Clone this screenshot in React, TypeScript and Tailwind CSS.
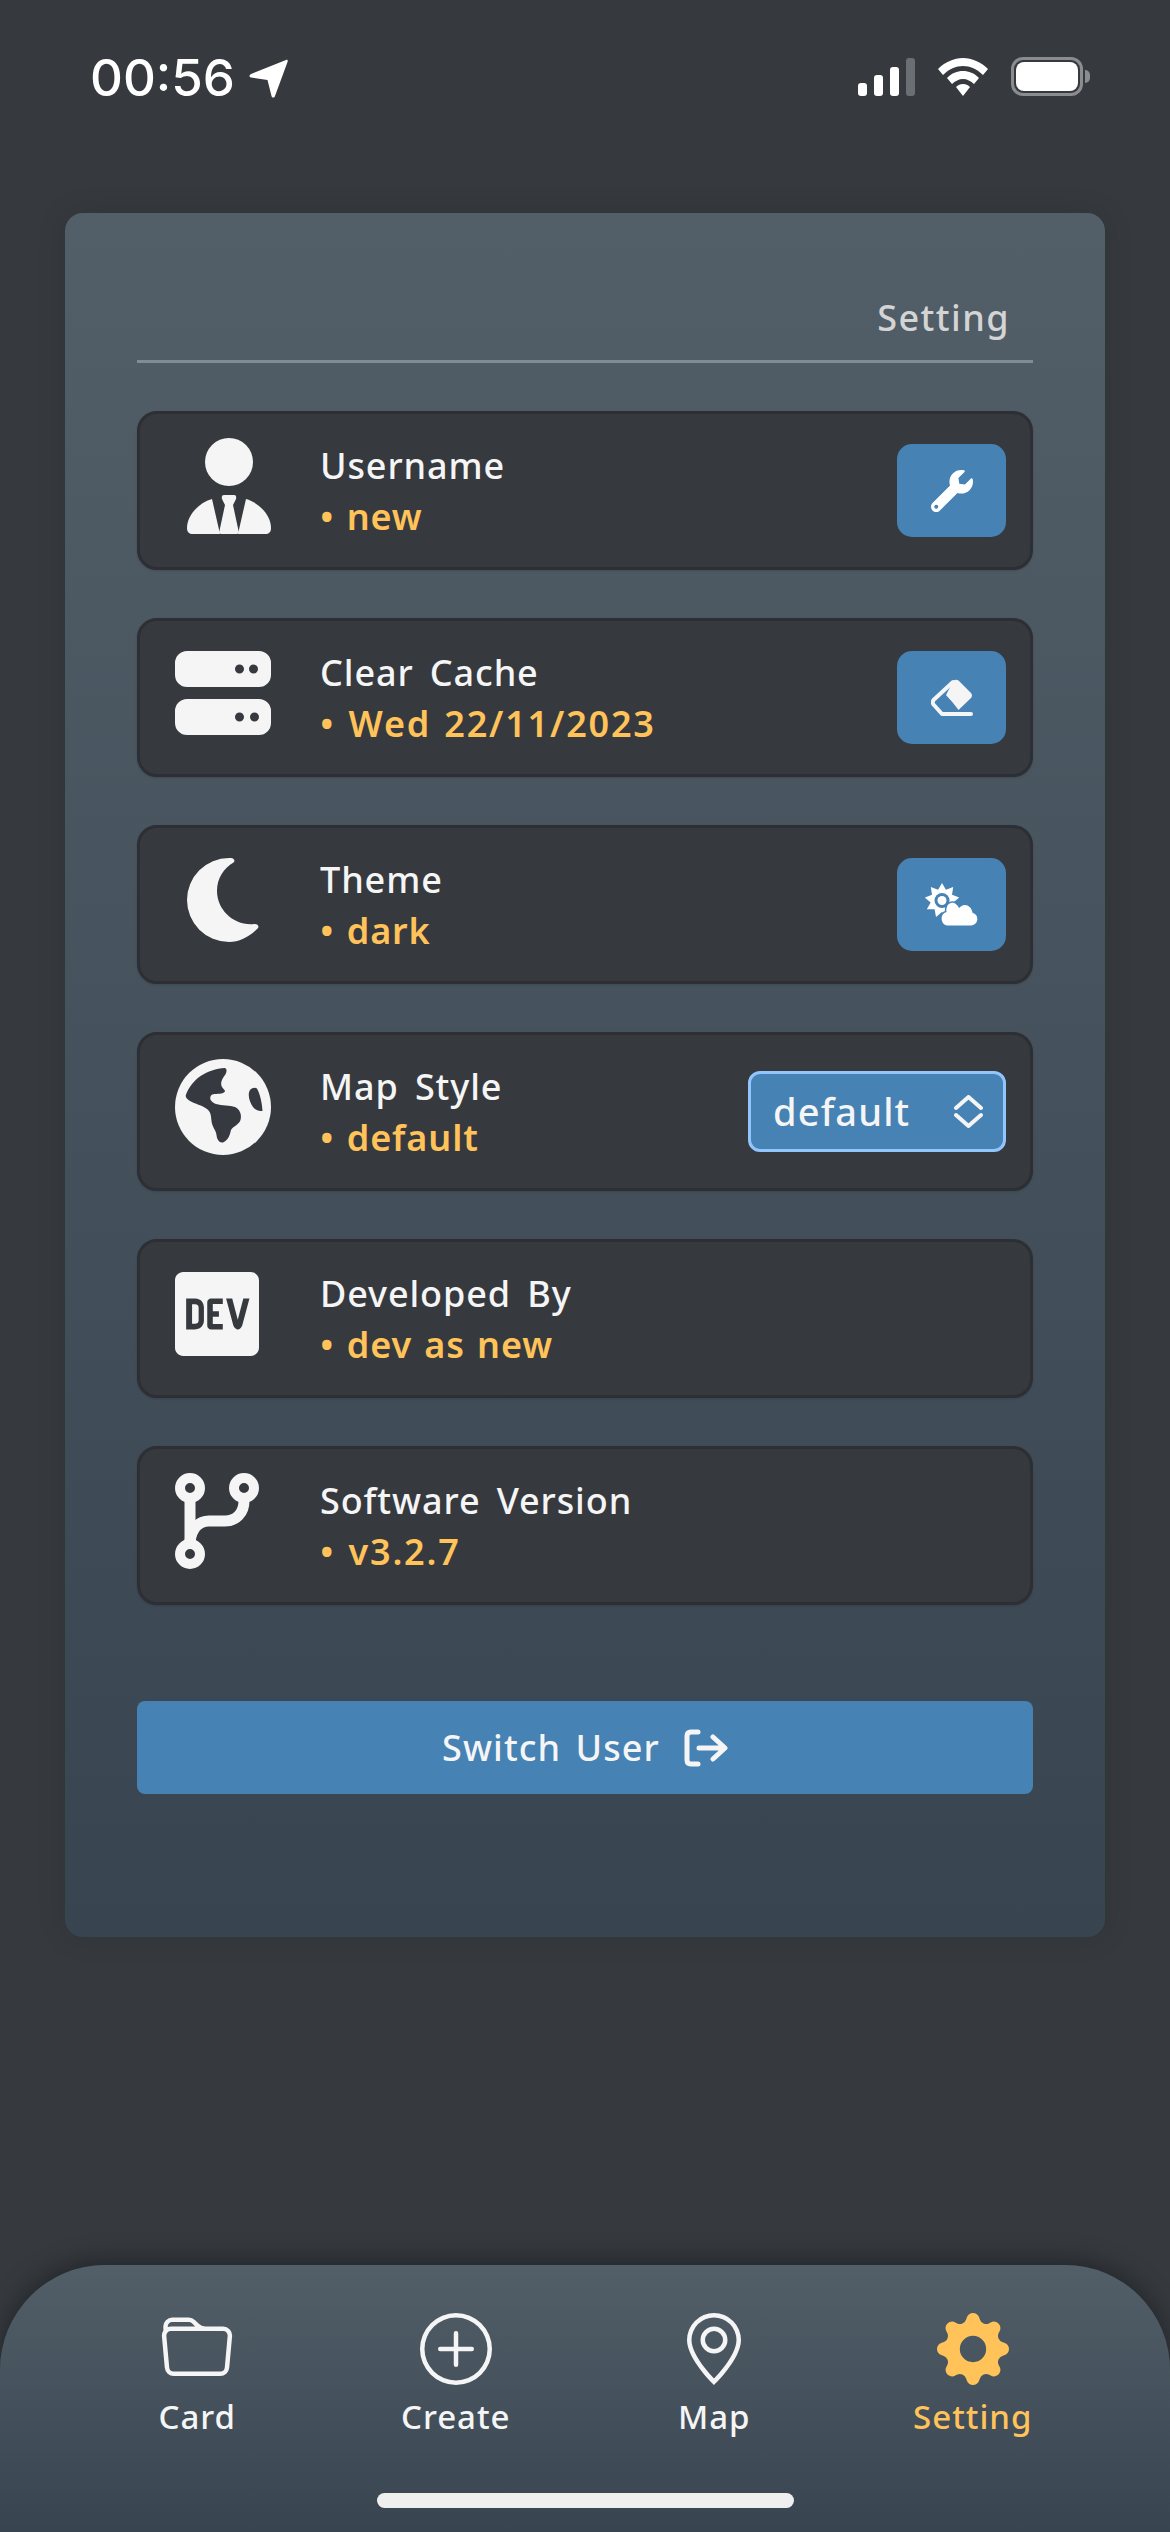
// Settings screen
import type { ReactNode } from 'react';
import { BsFolder, BsPlusCircle, BsGeoAlt, BsGearFill } from 'react-icons/bs';
import { FaDev, FaWrench } from 'react-icons/fa';

const font = { fontFamily: '"Noto Sans", sans-serif' };

const UserTieIcon = () => (
  <svg width="84" height="96" viewBox="0 0 84 96" fill="#f5f5f5" className="ml-3">
    <circle cx="42" cy="24" r="24" />
    <path d="M25 61 C11 65 0 78 0 90 C0 94 2 96 6 96 L33 96 Z" />
    <path d="M59 61 C73 65 84 78 84 90 C84 94 82 96 78 96 L51 96 Z" />
    <path d="M37 57 H47 Q50 57 49 61 L46 67 L52 95 L50 96 H34 L32 95 L38 67 L35 61 Q34 57 37 57 Z" />
  </svg>
);

const ServerIcon = () => (
  <svg width="96" height="84" viewBox="0 0 96 84" fill="#f5f5f5">
    <path fillRule="evenodd" d="M12 0 H84 A12 12 0 0 1 96 12 V24 A12 12 0 0 1 84 36 H12 A12 12 0 0 1 0 24 V12 A12 12 0 0 1 12 0 Z M60 18 a4.5 4.5 0 1 0 9 0 a4.5 4.5 0 1 0 -9 0 Z M74 18 a4.5 4.5 0 1 0 9 0 a4.5 4.5 0 1 0 -9 0 Z" />
    <path fillRule="evenodd" d="M12 48 H84 A12 12 0 0 1 96 60 V72 A12 12 0 0 1 84 84 H12 A12 12 0 0 1 0 72 V60 A12 12 0 0 1 12 48 Z M60 66 a4.5 4.5 0 1 0 9 0 a4.5 4.5 0 1 0 -9 0 Z M75 66 a4.5 4.5 0 1 0 9 0 a4.5 4.5 0 1 0 -9 0 Z" />
  </svg>
);

const MoonIcon = () => (
  <svg width="72" height="84" viewBox="0 0 72 84" fill="#f5f5f5" className="ml-3">
    <path d="M44 0 C47 0 48.5 3 46.5 4.5 C37 10 30 20 30 33 C30 52 47 68 67 66 C71 65.5 73 69 70 71 C62 79 52 84 42 84 A42 42 0 0 1 42 0 Z" />
  </svg>
);

const GlobeIcon = () => (
  <svg width="96" height="96" viewBox="0 0 96 96">
    <circle cx="48" cy="48" r="48" fill="#f5f5f5" />
    <path
      fill="#36393f"
      d="M11 35.5 C17 20 32 10 50 9 C52 10 52 13 50 16 C47 20 45 24 47 28 C49 31 52 32 48 34 C44 35.5 38 34 36 36.5 C34 40 36 43 41 45 C47 47 55 46 60 48 C65 50 67 56 65.5 61 C64 66 58 67 56 71 C55 75 54 80 49 83 C45 85 42 81 41.5 76 C41 71 37 68 36.5 62 C36 57 36 53 32 50 C27 46 20 45 15 42 C12 40 10 38 11 35.5 Z"
    />
    <path fill="#36393f" d="M75 31 C77 29 80 28 82 29.5 C85 35 87 43 87.5 52 C84 52 80 51 78 48 C75 44 72 36 75 31 Z" />
  </svg>
);

const BranchIcon = () => (
  <svg width="84" height="96" viewBox="0 0 84 96" fill="none" stroke="#f5f5f5">
    <circle cx="15" cy="15" r="10" strokeWidth="10" />
    <circle cx="69" cy="15" r="10" strokeWidth="10" />
    <circle cx="15" cy="81" r="10" strokeWidth="10" />
    <path d="M15 28 V68" strokeWidth="11" />
    <path d="M69 28 C69 40 61 48 50 48 H34 C24 48 17 55 15 68" strokeWidth="11" />
  </svg>
);

const EraserIcon = () => (
  <svg width="42" height="38" viewBox="0 0 42 38" fill="#f5f5f5">
    <path d="M22.5 1.5 Q25 0 27.5 1.5 L40 14 Q42 16.5 40 19 L27.5 31 L15.5 15 Z" />
    <path d="M22 3 L2.5 21 Q1 23.5 2.5 25.5 L11 35 H40" fill="none" stroke="#f5f5f5" strokeWidth="4" strokeLinecap="round" strokeLinejoin="round" />
    <path d="M16 15 L28 28" fill="none" stroke="#f5f5f5" strokeWidth="3" />
  </svg>
);

// spiky sun outline
const sunPoints = Array.from({ length: 18 }, (_, i) => {
  const r = i % 2 === 0 ? 17.5 : 11.5;
  const a = (i * Math.PI) / 9 - Math.PI / 2;
  return `${(17 + r * Math.cos(a)).toFixed(1)},${(17.5 + r * Math.sin(a)).toFixed(1)}`;
}).join(' ');

const CloudSunIcon = () => (
  <svg width="54" height="44" viewBox="0 0 54 44" fill="#fff">
    <polygon points={sunPoints} />
    <circle cx="17" cy="17.5" r="7.5" fill="#4682b4" />
    <circle cx="17" cy="17.5" r="4.5" />
    <path
      stroke="#4682b4"
      strokeWidth="3"
      paintOrder="stroke"
      d="M22 42.5 H46 A6.5 6.5 0 0 0 47.5 29.7 C47 25 43 21.5 39 22 C37 22.5 35 24 34 25 C32 21 29 19 26 20 C22 21 21 25 21.5 29 A7 7 0 0 0 22 42.5 Z"
    />
  </svg>
);

const LogoutIcon = () => (
  <svg width="44" height="38" viewBox="0 0 44 38" fill="none" stroke="#f5f5f5" strokeWidth="5" strokeLinecap="round" strokeLinejoin="round">
    <path d="M14 3 H7 Q3 3 3 7 V31 Q3 35 7 35 H14" />
    <path d="M15 19 H40 M29 8 L41 19 L29 30" />
  </svg>
);

const ActionButton = ({ children }: { children: ReactNode }) => (
  <button className="w-[109px] h-[93px] bg-[#4682b4] rounded-[15px] flex items-center justify-center">{children}</button>
);

const Row = ({ icon, title, value, action, digits }: { icon: ReactNode; title: string; value: string; action?: ReactNode; digits?: boolean }) => (
  <div className="h-[159px] border-[3px] border-[#2d2f34] rounded-[20px] bg-[#363a3f] flex items-start pl-[35px] pt-[24px] shadow-sm">
    <div className="w-[96px] h-[96px] flex items-center shrink-0">{icon}</div>
    <div className="ml-[49px] pt-[2px]">
      <div className="text-[36px] leading-[51px] font-medium tracking-[0.025em] [word-spacing:6px] text-[#f5f5f5]">{title}</div>
      <div className={`text-[36px] leading-[51px] font-semibold [word-spacing:2px] text-[#ffc35a] ${digits ? 'tracking-[0.05em]' : 'tracking-[0.025em]'}`}>• {value}</div>
    </div>
    {action && <div className="ml-auto mr-[24px] mt-[6px]">{action}</div>}
  </div>
);

const NavItem = ({ icon, label, active }: { icon: ReactNode; label: string; active?: boolean }) => (
  <div className="flex flex-col items-center">
    <div className="h-[72px] flex items-center justify-center">{icon}</div>
    <span className={`text-[33px] leading-[44px] mt-[10px] font-medium tracking-[0.03em] ${active ? 'text-[#ffc35a]' : 'text-[#f5f5f5]'}`}>{label}</span>
  </div>
);

export default function App() {
  return (
    <div className="h-[2532px] bg-[#363a3f] flex flex-col overflow-hidden" style={font}>
      {/* status bar */}
      <div className="h-[213px] shrink-0 flex items-start justify-between pl-[90px] pr-[80px] pt-[50px]">
        <div className="flex items-center text-white gap-[14px]">
          <span className="text-[51px] leading-[56px] font-medium" style={{ fontFamily: 'Inter, sans-serif' }}>00:56</span>
          <svg width="39" height="39" viewBox="0 0 39 39" fill="#fff">
            <path d="M37 1 C38 0.5 39 1 38.7 2.5 L26 37 C25.4 39 23 39 22.5 37 L18.5 21 L2 18.5 C0 18 0 16 2 15 Z" />
          </svg>
        </div>
        <div className="flex items-center gap-[23px] pt-[7px]">
          <div className="flex items-end gap-[7px] h-[38px]">
            <div className="w-[9px] h-[13px] bg-white rounded-[3px]" />
            <div className="w-[9px] h-[21px] bg-white rounded-[3px]" />
            <div className="w-[9px] h-[29px] bg-white rounded-[3px]" />
            <div className="w-[9px] h-[38px] bg-[#6b6e73] rounded-[3px]" />
          </div>
          <svg width="50" height="38" viewBox="0 0 50 38" fill="#fff">
            <path d="M25 0 C34 0 43 4 50 11 L45 17 C39 11 32 8 25 8 C18 8 11 11 5 17 L0 11 C7 4 16 0 25 0 Z" />
            <path d="M25 13 C31 13 36 15 41 20 L36 26 C33 23 29 21 25 21 C21 21 17 23 14 26 L9 20 C14 15 19 13 25 13 Z" />
            <path d="M25 26 C28 26 30 27 32 29 L25 38 L18 29 C20 27 22 26 25 26 Z" />
          </svg>
          <div className="flex items-center">
            <div className="w-[72px] h-[39px] rounded-[12px] border-[3px] border-[#8a8c90] p-[2px]">
              <div className="w-full h-full bg-white rounded-[8px]" />
            </div>
            <div className="w-[5px] h-[13px] bg-[#8a8c90] rounded-r-full ml-[2px]" />
          </div>
        </div>
      </div>

      {/* card */}
      <div className="mx-[65px] h-[1724px] shrink-0 rounded-[18px] bg-gradient-to-b from-[#525f69] to-[#38444f] px-[72px] shadow-[0_0_30px_rgba(0,0,0,0.12)]">
        <div className="h-[150px] border-b-[3px] border-[#7f8b95] flex justify-end items-start pt-[83px] pr-[23px]">
          <span className="text-[36px] leading-[44px] text-[#d4d4d4] font-medium tracking-[0.04em]">Setting</span>
        </div>
        <div className="mt-[48px] flex flex-col gap-[48px]">
          <Row icon={<UserTieIcon />} title="Username" value="new" action={<ActionButton><FaWrench size={42} color="#fff" /></ActionButton>} />
          <Row icon={<ServerIcon />} title="Clear Cache" value="Wed 22/11/2023" digits action={<ActionButton><EraserIcon /></ActionButton>} />
          <Row icon={<MoonIcon />} title="Theme" value="dark" action={<ActionButton><CloudSunIcon /></ActionButton>} />
          <Row
            icon={<GlobeIcon />}
            title="Map Style"
            value="default"
            action={
              <div className="w-[258px] h-[81px] mt-[6px] bg-[#4682b4] border-[3px] border-[#93c5fd] rounded-[12px] flex items-center justify-between pl-[22px] pr-[20px]">
                <span className="text-[38px] font-medium text-[#f5f5f5] tracking-[0.03em]">default</span>
                <svg width="29" height="33" viewBox="0 0 29 33" fill="none" stroke="#f5f5f5" strokeWidth="4" strokeLinecap="round" strokeLinejoin="round">
                  <path d="M2 13 L14.5 2 L27 13 M2 20 L14.5 31 L27 20" />
                </svg>
              </div>
            }
          />
          <Row icon={<FaDev size={96} color="#f5f5f5" className="-ml-[6px]" />} title="Developed By" value="dev as new" />
          <Row icon={<BranchIcon />} title="Software Version" value="v3.2.7" digits />
        </div>
        <button className="mt-[96px] w-full h-[93px] bg-[#4682b4] rounded-[8px] flex items-center justify-center gap-[24px] text-[36px] font-medium text-[#f5f5f5] tracking-[0.03em] [word-spacing:4px]">
          Switch User
          <LogoutIcon />
        </button>
      </div>

      {/* tab bar */}
      <div className="mt-auto h-[267px] shrink-0 rounded-t-[105px] bg-gradient-to-b from-[#525f69] to-[#38444f] shadow-[0_-6px_24px_rgba(0,0,0,0.35)] flex flex-col">
        <div className="grid grid-cols-4 px-[68px] pt-[48px]">
          <NavItem icon={<BsFolder size={72} color="#f5f5f5" />} label="Card" />
          <NavItem icon={<BsPlusCircle size={72} color="#f5f5f5" />} label="Create" />
          <NavItem icon={<BsGeoAlt size={72} color="#f5f5f5" />} label="Map" />
          <NavItem icon={<BsGearFill size={72} color="#ffc35a" />} label="Setting" active />
        </div>
        <div className="mt-auto mb-[24px] mx-auto w-[417px] h-[15px] rounded-full bg-[#efefef]" />
      </div>
    </div>
  );
}
